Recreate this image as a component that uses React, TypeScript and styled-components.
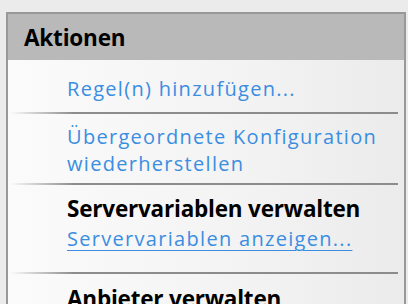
import React from "react";
import styled, { createGlobalStyle } from "styled-components";

const Global = createGlobalStyle`
  html, body { margin: 0; padding: 0; }
  body {
    width: 408px;
    height: 304px;
    overflow: hidden;
    background: #ebebeb;
    font-family: "Open Sans", "Noto Sans", "Liberation Sans", sans-serif;
  }
`;

const Page = styled.div`
  padding: 12px 2px 0 6px;
  height: 304px;
  box-sizing: border-box;
`;

const Panel = styled.div`
  border: 2px solid #999999;
  border-bottom: none;
  height: 100%;
  box-sizing: border-box;
  overflow: hidden;
  background: linear-gradient(to right, #fbfbfb 0%, #f3f3f3 60%, #ebebeb 100%);
`;

const Header = styled.div`
  height: 46px;
  background: #b9b9b9;
  display: flex;
  align-items: center;
  padding-left: 16px;
  font-weight: 700;
  font-size: 22.5px;
  color: #000;
  letter-spacing: -0.2px;
`;

const Group = styled.div<{ $top: number; $bottom: number }>`
  display: flex;
  flex-direction: column;
  padding: ${(p) => p.$top}px 0 ${(p) => p.$bottom}px 59px;
  gap: 3px;
`;

const ActionLink = styled.a<{ $underline?: boolean }>`
  display: block;
  font-size: 20px;
  line-height: 27px;
  color: #3a8ee2;
  text-decoration: ${(p) => (p.$underline ? "underline" : "none")};
  text-underline-offset: 4px;
  text-decoration-thickness: 1px;
  letter-spacing: 1.3px;
  cursor: pointer;
`;

const GroupTitle = styled.div`
  font-size: 22.5px;
  font-weight: 700;
  line-height: 27px;
  color: #000;
  letter-spacing: -0.2px;
`;

const Separator = styled.div`
  height: 2px;
  margin: 0 6px 0 2px;
  background: linear-gradient(to right, rgba(140, 140, 140, 0) 0px, #8c8c8c 64px, #8c8c8c 100%);
`;

export default function App() {
  return (
    <>
      <Global />
      <Page>
        <Panel>
          <Header>Aktionen</Header>
          <Group $top={15} $bottom={10}>
            <ActionLink>Regel(n) hinzufügen...</ActionLink>
          </Group>
          <Separator />
          <Group $top={9} $bottom={6}>
            <ActionLink>
              Übergeordnete Konfiguration
              <br />
              wiederherstellen
            </ActionLink>
          </Group>
          <Separator />
          <Group $top={10} $bottom={20}>
            <GroupTitle>Servervariablen verwalten</GroupTitle>
            <ActionLink $underline>Servervariablen anzeigen...</ActionLink>
          </Group>
          <Separator />
          <Group $top={11} $bottom={10}>
            <GroupTitle>Anbieter verwalten</GroupTitle>
          </Group>
        </Panel>
      </Page>
    </>
  );
}
